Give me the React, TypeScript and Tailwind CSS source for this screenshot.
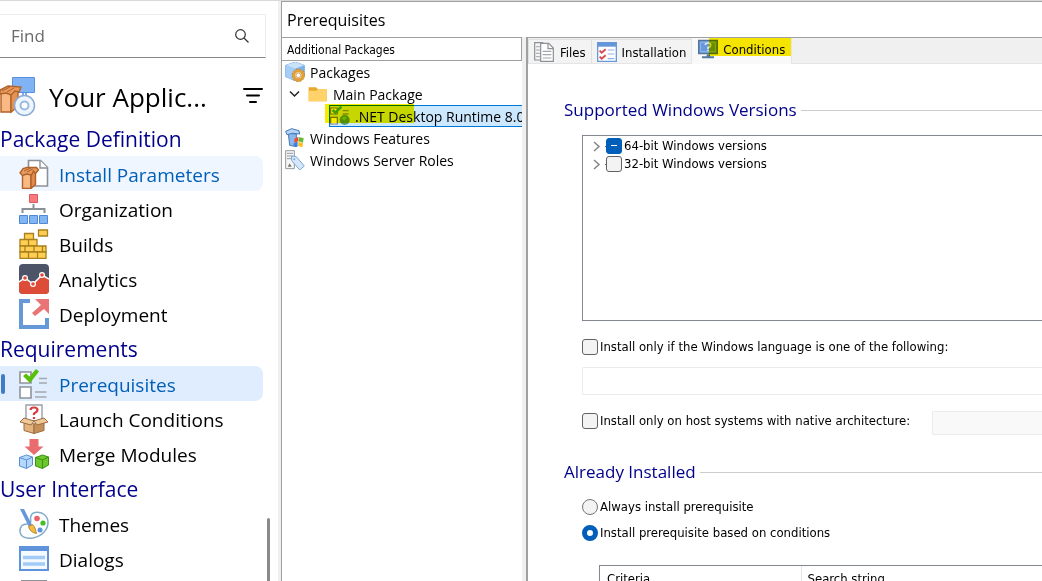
import { useEffect, useRef, useState } from 'react';
import type { ReactNode } from 'react';

const Svg = ({ size = 30, children }: { size?: number; children: ReactNode }) => (
    <svg width={size} height={size} viewBox="0 0 30 30" fill="none" className="shrink-0" aria-hidden="true">
        {children}
    </svg>
);

const ParametersIcon = () => (
    <Svg>
        <path d="M9.5 1.5h12l7 7v18.5h-19z" fill="#fff" stroke="#8d9096" strokeWidth="1.6" />
        <path d="M21 1.5v7.5h7.5" fill="#fff" stroke="#8d9096" strokeWidth="1.4" />
        <path d="M3.5 12h8.5v17.5H3.500z" fill="#f8b982" stroke="#b0622b" strokeWidth="1.4" />
        <path d="M12 12l4.500-3v16.500L12 29.500z" fill="#e08b4c" stroke="#b0622b" strokeWidth="1.4" />
        <path d="M1 14l3-4.500 4-1h9.500l2 2.500-3 3.500-2-2.500-2 4-5-1-4 1.500z" fill="#e99a5c" stroke="#b0622b" strokeWidth="1.4" />
        <path d="M5 12l7-3M8 13l6-3" stroke="#b0622b" />
    </Svg>
);

const OrganizationIcon = () => (
    <Svg>
        <path d="M10.500.5h8v8h-8z" fill="#f97a7e" stroke="#d95a60" />
        <path d="M14.500 10v5M3.500 19v-4h22v4" stroke="#8b9097" strokeWidth="2" />
        <path d="M.5 21.500h8v8h-8zM10.500 21.500h8v8h-8zM20.500 21.500h8v8h-8z" fill="#82b5f3" stroke="#5187d3" />
    </Svg>
);

const BuildsIcon = () => (
    <Svg>
        <g fill="#ffce52" stroke="#a8811e" strokeWidth="1.3">
            <path d="M19.500 1h9v6h-9zM5.500 4.500h9v6h-9zM1 10.500h8.500v6.500H1zM9.500 10.500h8.500v6.500H9.500z" />
            <path d="M1 17h5v6H1zM6 17h9v6H6zM15 17h8.500v6H15zM23.500 17h3.500v6h-3.500z" />
            <path d="M1 23h8.500v6.500H1zM9.500 23h9v6.500h-9zM18.500 23H27v6.500h-8.500z" />
        </g>
    </Svg>
);

const AnalyticsIcon = () => (
    <Svg>
        <path d="M4 0h22q4 0 4 4v22q0 4-4 4H4q-4 0-4-4V4q0-4 4-4z" fill="#4c5468" />
        <path d="M0 18l6-4 8 6 9-9 7 4v11q0 4-4 4H4q-4 0-4-4z" fill="#dd4b39" />
        <path d="M0 18l6-4 8 6 9-9 7 4" stroke="#fff" strokeWidth="1.500" />
        <g fill="#dd4b39" stroke="#fff" strokeWidth="1.200">
            <circle cx="6" cy="14" r="2.400" />
            <circle cx="14" cy="20" r="2.400" />
            <circle cx="23" cy="11" r="2.400" />
        </g>
    </Svg>
);

const DeploymentIcon = () => (
    <Svg>
        <path d="M11 2H2v26h26v-9" stroke="#6699d8" strokeWidth="4" />
        <path d="M16 0h14v15l-5-5-9 7-3-3 9-8z" fill="#ea7375" />
    </Svg>
);

const PrerequisitesIcon = () => (
    <Svg>
        <path d="M1 3h11v11H1zM1 18h11v11H1z" fill="#fff" stroke="#8e9399" strokeWidth="1.600" />
        <path d="M20 9.500h8M20 14h8M16 23h11.500M16 28h11.500" stroke="#a3a8af" strokeWidth="1.500" />
        <path d="M4 7l3-2.500 3.500 3L17 0l3 2.500L11 14z" fill="#58bf0b" />
    </Svg>
);

const LaunchIcon = () => (
    <Svg>
        <path d="M7 1h16v16H7z" fill="#fff" stroke="#9c9ea3" strokeWidth="1.400" />
        <path d="M11.500 6q0-2.500 3.500-2.500t3.500 2.500q0 1.500-2 2.500t-1.500 2.500M15 13v2" stroke="#d83a3e" strokeWidth="2.200" />
        <path d="M5 17l10 3v9.500l-10-3z" fill="#e4b27c" stroke="#9b6c42" />
        <path d="M25 17l-10 3v9.500l10-3z" fill="#c58f59" stroke="#9b6c42" />
        <path d="M5 14L1 18l11 3 3-4zM25 14l4 4-11 3-3-4z" fill="#f0c99b" stroke="#9b6c42" />
    </Svg>
);

const MergeIcon = () => (
    <Svg>
        <path d="M10.500 0h9v7.500h5L15 16 5.500 7.500h5z" fill="#e96d6e" />
        <path d="M.5 18.500l7-2.500 6 2v8l-6 3.500-7-2.500z" fill="#b5d7fb" stroke="#5a8fd4" />
        <path d="M.5 18.500l7 2.500 6-3M7.500 21v8.500" stroke="#5a8fd4" />
        <path d="M16.500 18.500l7-2.500 6 2v8l-6 3.500-7-2.500z" fill="#6cc82c" stroke="#3f8f12" />
        <path d="M16.500 18.500l7 2.500 6-3M23.500 21v8.500" stroke="#3f8f12" />
    </Svg>
);

const ThemesIcon = () => (
    <Svg>
        <path d="M16 3.500c7-1 13 3 13 10s-6 14-15 15.500C7 30 1 28 1 22c0-5 3-7 7-7 4 .5 4-2 3.500-5 0-3 1-6 4.500-6.500z" fill="#fcfeff" stroke="#83aac6" strokeWidth="1.500" />
        <circle cx="18" cy="9.500" r="2.800" fill="#ee6068" />
        <circle cx="24" cy="14" r="2.600" fill="#46bd22" />
        <circle cx="21" cy="21" r="2.500" fill="#5c93df" />
        <path d="M1 0h4l8 16-3 2z" fill="#6797d8" />
        <path d="M9.500 17.500l4-2c3 3 3 6 4 9-4-.5-7-3-8-7z" fill="#f6bb45" stroke="#b4872e" />
    </Svg>
);

const DialogsIcon = () => (
    <Svg>
        <path d="M1 3h28v23H1z" fill="#f5faff" stroke="#5f93db" strokeWidth="2" />
        <path d="M0 2h30v5H0z" fill="#5f93db" />
        <path d="M4 13.500h22M4 20h22" stroke="#a3cbf8" strokeWidth="3.500" />
    </Svg>
);

const PageIcon = () => (
    <Svg>
        <path d="M3 2h24v28H3z" fill="#f4f4f4" stroke="#8e9399" strokeWidth="2" />
    </Svg>
);

const PackagesIcon = () => (
    <Svg size={20}>
        <path d="M1 5L15 0l14 5v16L15 28 1 22z" fill="#7cb4ef" stroke="#5b8fce" />
        <path d="M1 5l14 5 14-5L15 0z" fill="#c9e2fa" />
        <path d="M1 5l14 5v18L1 22z" fill="#a4cdf7" />
        <circle cx="20" cy="20" r="7" fill="#fff" stroke="#e2a138" strokeWidth="5" />
        <circle cx="20" cy="20" r="9.500" stroke="#b77f2a" strokeDasharray="3 2" />
        <circle cx="20" cy="20" r="3.500" stroke="#b77f2a" />
    </Svg>
);

const FolderIcon = () => (
    <Svg size={20}>
        <path d="M1 5h11l3 3h13v18H1z" fill="#e8a92c" />
        <path d="M1 10h11l3-2h13v18H1z" fill="#ffd36a" />
    </Svg>
);

const RuntimeIcon = () => (
    <Svg size={20}>
        <path d="M1 3h10v9H1zM1 17h10v10H1z" fill="#fff" stroke="#777c83" strokeWidth="1.800" />
        <path d="M4 6l4 4 9-9" stroke="#42ad21" strokeWidth="4" />
        <path d="M19 7h9M19 12h9" stroke="#8c9198" strokeWidth="2" />
        <circle cx="22" cy="21" r="7.500" fill="#569b72" />
        <path d="M17 18q5-4 8-1l-3 5z" fill="#75c069" />
    </Svg>
);

const FeaturesIcon = () => (
    <Svg size={20}>
        <path d="M5 8l12 1v19l-10-2z" fill="#8bb8ec" stroke="#4679b8" strokeWidth="1.500" />
        <path d="M1 5l9-4 11 3 1 5-11-1-8 2z" fill="#b5d4f6" stroke="#4679b8" strokeWidth="1.500" />
        <path d="M14 16l6-3v7l-6 2z" fill="#ef4b35" />
        <path d="M21 14l7 1-1 7-7-2z" fill="#68b936" />
        <path d="M13 23l6-2v7l-6-1z" fill="#3c82db" />
        <path d="M20 21l7 2-1 6-6-2z" fill="#f9bd22" />
    </Svg>
);

const RolesIcon = () => (
    <Svg size={20}>
        <path d="M1 1h13v27H1z" fill="#f6f6f6" stroke="#94989e" strokeWidth="1.500" />
        <path d="M3 5h9M3 9h9M3 13h9" stroke="#94989e" strokeWidth="1.500" />
        <path d="M4 25l3-5 3 5z" fill="#777" />
        <path d="M10 9l7 1 12 14-7 6-12-14z" fill="#d5e8fb" stroke="#7da7d3" strokeWidth="1.500" />
        <circle cx="14" cy="14" r="1.500" fill="#7da7d3" />
    </Svg>
);

const FilesIcon = () => (
    <Svg size={20}>
        <path d="M1 1h12v26H1z" fill="#f5f5f5" stroke="#8d9196" strokeWidth="1.800" />
        <path d="M3 7h6M3 12h6M3 17h6M3 22h6" stroke="#a2a5aa" strokeWidth="1.500" />
        <path d="M10 2h12l7 7v20H10z" fill="#fff" stroke="#8d9196" strokeWidth="1.800" />
        <path d="M21 2v8h8" stroke="#8d9196" strokeWidth="1.800" />
        <path d="M13 14h13M13 19h13M13 24h13" stroke="#a2a5aa" strokeWidth="1.800" />
    </Svg>
);

const InstallationIcon = () => (
    <Svg size={20}>
        <path d="M1 1h28v28H1z" fill="#fff" stroke="#6999d8" strokeWidth="2" />
        <path d="M1 1h28v6H1z" fill="#6496da" />
        <path d="M4 13l3 3 6-5M4 22l3 3 6-5" stroke="#d94a54" strokeWidth="3" />
        <path d="M16 12h10M16 18h10M16 25h10" stroke="#91b3df" strokeWidth="1.800" />
    </Svg>
);

const ConditionsIcon = () => (
    <Svg size={20}>
        <path d="M1 2h28v20H1z" fill="#6798dc" stroke="#54749a" strokeWidth="2" />
        <path d="M4 5h22v14H4z" stroke="#a9c8ef" />
        <path d="M11 9q0-3 4-3t4 3-4 4v2M15 16v2" stroke="#d9e8fa" strokeWidth="2.500" />
        <path d="M13 23h5v3h-5zM6 26h18v3H6z" fill="#55799e" />
    </Svg>
);

const AppLogo = () => (
    <svg width="36" height="40" viewBox="0 0 36 40" fill="none" className="shrink-0" aria-hidden="true">
        <path d="M12.500.5h22v15h-22z" fill="#7fb3f4" stroke="#5790df" />
        <path d="M23 16v4M26 16v4" stroke="#5790df" strokeWidth="1.500" />
        <path d="M1 15l10 1v19H1z" fill="#fab982" stroke="#b0622b" strokeWidth="1.400" />
        <path d="M11 16l7-4v9q-4 4-3 11l-4 3z" fill="#e49355" stroke="#b0622b" strokeWidth="1.400" />
        <path d="M0 13l8-4 13 1-2 5-4-1-4 4-5-2-6 1z" fill="#e99a5c" stroke="#b0622b" strokeWidth="1.400" />
        <path d="M2 14l8-4M7 15l7-4" stroke="#b0622b" />
        <circle cx="24.500" cy="28.500" r="10" fill="#edf5fe" stroke="#8dabd4" strokeWidth="1.500" />
        <circle cx="24.500" cy="28.500" r="4" fill="#fff" stroke="#9ab9df" strokeWidth="2" />
    </svg>
);

const sections = [
    {
        title: 'Package Definition',
        items: [
            { name: 'Install Parameters', icon: <ParametersIcon /> },
            { name: 'Organization', icon: <OrganizationIcon /> },
            { name: 'Builds', icon: <BuildsIcon /> },
            { name: 'Analytics', icon: <AnalyticsIcon /> },
            { name: 'Deployment', icon: <DeploymentIcon /> },
        ],
    },
    {
        title: 'Requirements',
        items: [
            { name: 'Prerequisites', icon: <PrerequisitesIcon /> },
            { name: 'Launch Conditions', icon: <LaunchIcon /> },
            { name: 'Merge Modules', icon: <MergeIcon /> },
        ],
    },
    {
        title: 'User Interface',
        items: [
            { name: 'Themes', icon: <ThemesIcon /> },
            { name: 'Dialogs', icon: <DialogsIcon /> },
            { name: '', icon: <PageIcon /> },
        ],
    },
];

function itemStyle(name: string, active: string) {
    if (name === active) return 'bg-[#e0edff] text-[#005fb8]';
    if (name === 'Install Parameters') return 'bg-[#f0f6ff] text-[#005fb8]';
    return 'text-black hover:bg-[#f0f6ff]';
}

function Sidebar() {
    const [active, setActive] = useState('Prerequisites');

    return (
        <aside className="relative w-[278px] shrink-0 overflow-hidden pt-[13px] font-['Open_Sans','Noto_Sans',sans-serif]">
            <div className="mr-3 flex h-11 items-center border border-l-0 border-[#ececec] border-b-[#868686] pr-4">
                <input
                    type="text"
                    aria-label="Find"
                    placeholder="Find"
                    className="min-w-0 flex-1 bg-transparent pl-[11px] text-[17px] placeholder:text-[#6a6a6a] focus:outline-none"
                />
                <svg width="14" height="14" viewBox="0 0 14 14" fill="none" stroke="#333" strokeWidth="1.200" aria-hidden="true">
                    <circle cx="5.500" cy="5.500" r="4.800" />
                    <path d="M9 9l4.500 4.500" />
                </svg>
            </div>

            <div className="flex h-[63px] items-center pt-[15px] pr-[15px]">
                <AppLogo />
                <h1 className="ml-[13px] flex-1 text-[26px] leading-8 whitespace-nowrap">Your Applic...</h1>
                <button type="button" aria-label="Filter">
                    <svg width="20" height="16" viewBox="0 0 20 16" stroke="#000" strokeWidth="2" strokeLinecap="round" className="mb-1">
                        <path d="M1 2h18M4 8.500h12M7 15h6" />
                    </svg>
                </button>
            </div>

            <nav>
                {sections.map((section) => (
                    <div key={section.title}>
                        <h2 className="h-[35px] text-[21px] leading-[37px] whitespace-nowrap text-[#00008b]">{section.title}</h2>
                        {section.items.map((item) => (
                            <button
                                key={item.name}
                                type="button"
                                onClick={() => setActive(item.name)}
                                className={`relative flex h-[35px] w-[263px] items-center gap-[10px] rounded-r-lg pl-[19px] text-left text-[19px] whitespace-nowrap ${itemStyle(item.name, active)}`}
                            >
                                {item.name === active && <span className="absolute top-2 left-px h-5 w-1 rounded-full bg-[#3f7cc4]"></span>}
                                {item.icon}
                                <span className="pt-[3px]">{item.name}</span>
                            </button>
                        ))}
                    </div>
                ))}
            </nav>

            {/* Scroll thumb */}
            <div className="absolute right-2 -bottom-1 h-[67px] w-[3px] rounded-full bg-[#8a8a8a]"></div>
        </aside>
    );
}

function PackageTree() {
    return (
        <section className="w-60 shrink-0 overflow-hidden bg-white whitespace-nowrap">
            <h3 className="-ml-px h-6 border border-[#a0a0a0] pl-[5px] font-['DejaVu_Sans_Condensed','DejaVu_Sans',sans-serif] text-[12px] leading-6">Additional Packages</h3>
            <ul role="tree" className="font-['Open_Sans','Noto_Sans',sans-serif] text-[14px] leading-5">
                <li role="treeitem" className="flex h-[22px] items-center gap-[5px] pl-[3px]">
                    <PackagesIcon />
                    <span className="pt-0.5">Packages</span>
                </li>
                <li role="treeitem" className="flex h-[22px] items-center gap-[5px] pl-[7px]">
                    <svg width="11" height="8" viewBox="0 0 11 8" fill="none" stroke="#222" strokeWidth="1.500" className="mr-[3px]" aria-hidden="true">
                        <path d="M1 1.500L5.500 6 10 1.500" />
                    </svg>
                    <FolderIcon />
                    <span className="pt-0.5">Main Package</span>
                </li>
                <li role="treeitem" aria-selected="true" className="relative h-[22px] pl-[47px]">
                    <div className="flex h-[22px] items-center gap-[5px] border border-r-0 border-[#0078d7] bg-[#cce8ff]">
                        <RuntimeIcon />
                        <span className="pt-0.5">.NET Desktop Runtime 8.0</span>
                    </div>
                    {/* Marker stroke */}
                    <span className="absolute -top-px left-[43px] h-[19px] w-[89px] bg-[#f7ec00] mix-blend-multiply"></span>
                </li>
                <li role="treeitem" className="flex h-[22px] items-center gap-[5px] pl-[3px]">
                    <FeaturesIcon />
                    <span className="pt-0.5">Windows Features</span>
                </li>
                <li role="treeitem" className="flex h-[22px] items-center gap-[5px] pl-[3px]">
                    <RolesIcon />
                    <span className="pt-0.5">Windows Server Roles</span>
                </li>
            </ul>
        </section>
    );
}

function Tabs() {
    return (
        <div role="tablist" className="flex h-[26px] items-end border-b border-[#e5e5e5] bg-[#f0f0f0]">
            <button role="tab" type="button" className="flex h-6 items-center gap-[6px] border border-b-0 border-[#e0e0e0] bg-[#f3f3f3] px-[5px]">
                <FilesIcon />
                <span className="pt-0.5">Files</span>
            </button>
            <button role="tab" type="button" className="flex h-6 items-center gap-[5px] border-t border-[#e0e0e0] bg-[#f3f3f3] px-[5px]">
                <InstallationIcon />
                <span className="pt-0.5">Installation</span>
            </button>
            <button role="tab" type="button" aria-selected="true" className="relative -mb-px flex h-[27px] items-center gap-[5px] border-x border-[#e5e5e5] bg-[#f9f9f9] px-[6px] pb-1">
                <ConditionsIcon />
                <span className="pt-0.5">Conditions</span>
                {/* Marker stroke */}
                <span className="absolute top-px right-0 left-[17px] h-[18px] bg-[#fbe900] mix-blend-multiply"></span>
            </button>
        </div>
    );
}

function Heading({ children }: { children: ReactNode }) {
    return (
        <div className="flex items-center gap-1">
            <h3 className="font-['Open_Sans','Noto_Sans',sans-serif] text-[17px] leading-6 whitespace-nowrap text-[#00008b]">{children}</h3>
            <div className="h-px flex-1 bg-[#cccccc]"></div>
        </div>
    );
}

function Check({ label, mixed = false }: { label: string; mixed?: boolean }) {
    const ref = useRef<HTMLInputElement>(null);

    useEffect(() => {
        if (ref.current) ref.current.indeterminate = mixed;
    }, [mixed]);

    return (
        <label className="relative flex h-[18px] items-center gap-[2px] whitespace-nowrap">
            <input
                ref={ref}
                type="checkbox"
                className="size-4 shrink-0 appearance-none rounded-[3px] border border-[#626262] bg-[#f3f3f3] checked:bg-[#005fb8] indeterminate:border-[#005fb8] indeterminate:bg-[#005fb8]"
            />
            {mixed && <span className="absolute top-2 left-[5px] h-px w-[6px] bg-white"></span>}
            {label}
        </label>
    );
}

function Radio({ label, checked = false }: { label: string; checked?: boolean }) {
    return (
        <label className="flex h-[18px] items-center gap-[2px] whitespace-nowrap">
            <input
                type="radio"
                name="installed"
                defaultChecked={checked}
                className="size-4 shrink-0 appearance-none rounded-full border border-[#767676] bg-[#f3f3f3] checked:border-[5px] checked:border-[#005fb8] checked:bg-white"
            />
            {label}
        </label>
    );
}

const Expander = () => (
    <svg width="13" height="18" viewBox="0 0 13 18" fill="none" aria-hidden="true">
        <path d="M1 5l5 4.500L1 14" stroke="#858585" strokeWidth="1.500" />
        <path d="M12 9.500h1" stroke="#777" />
    </svg>
);

function Conditions() {
    return (
        <div className="pt-[34px] pl-9">
            <Heading>Supported Windows Versions</Heading>
            <ul role="tree" className="mt-[13px] ml-[18px] h-[186px] border border-r-0 border-[#828790] pt-px pl-[10px]">
                <li role="treeitem" className="flex">
                    <Expander />
                    <Check label="64-bit Windows versions" mixed />
                </li>
                <li role="treeitem" className="flex">
                    <Expander />
                    <Check label="32-bit Windows versions" />
                </li>
            </ul>

            <div className="mt-[17px] ml-[18px]">
                <Check label="Install only if the Windows language is one of the following:" />
                <input type="text" disabled aria-label="Windows languages" className="mt-[11px] block h-7 w-full rounded-l-xs border border-r-0 border-[#ebebeb] bg-white" />
            </div>

            <div className="mt-4 ml-[18px] flex">
                <div className="w-[350px] pt-px">
                    <Check label="Install only on host systems with native architecture:" />
                </div>
                <input type="text" disabled aria-label="Native architecture" className="h-6 min-w-0 flex-1 rounded-l-xs border border-r-0 border-[#ebebeb] bg-[#f9f9f9]" />
            </div>

            <div className="mt-[25px]">
                <Heading>Already Installed</Heading>
            </div>
            <div className="mt-[14px] ml-[18px] flex flex-col gap-2">
                <Radio label="Always install prerequisite" />
                <Radio label="Install prerequisite based on conditions" checked />
            </div>

            <div className="mt-[23px] ml-[35px] border border-r-0 border-[#828790]">
                <table className="w-full table-fixed">
                    <thead>
                        <tr className="text-left leading-[26px]">
                            <th className="w-[201px] border-r border-[#e5e5e5] pl-[7px] font-normal">Criteria</th>
                            <th className="pl-[6px] font-normal">Search string</th>
                        </tr>
                    </thead>
                </table>
            </div>
        </div>
    );
}

export default function App() {
    return (
        <div className="flex h-screen overflow-hidden border-t border-[#d9d9d9] bg-white text-black">
            <Sidebar />
            <div className="w-[3px] shrink-0 bg-[#f0f0f0]"></div>
            <main className="flex min-w-0 flex-1 flex-col border-t border-l border-[#a0a0a0]">
                <h2 className="h-[35px] shrink-0 pl-[5px] font-['Open_Sans','Noto_Sans',sans-serif] text-[16px] leading-9">Prerequisites</h2>
                <div className="flex min-h-0 flex-1">
                    <PackageTree />
                    <div className="w-1 shrink-0 bg-[#f0f0f0]"></div>
                    <section className="min-w-0 flex-1 overflow-hidden border-t border-l-2 border-[#a0a0a0] font-['DejaVu_Sans_Condensed','DejaVu_Sans',sans-serif] text-[13px]">
                        <Tabs />
                        <Conditions />
                    </section>
                </div>
            </main>
        </div>
    );
}
